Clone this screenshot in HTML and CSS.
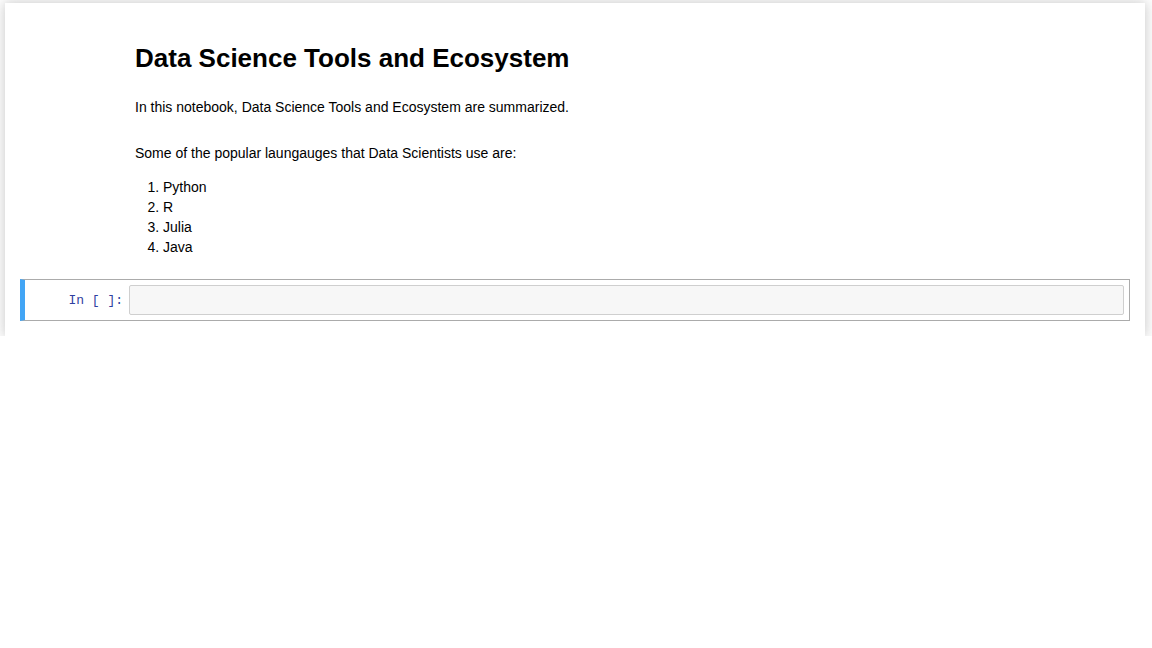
FILE: index.html
```html
<!DOCTYPE html>
<html>
<head>
<meta charset="utf-8">
<link rel="stylesheet" href="styles.css">
</head>
<body>
<div class="notebook">
  <div class="cell text-cell">
    <div class="rendered">
      <h1 class="title">Data Science Tools and Ecosystem</h1>
      <p class="para">In this notebook, Data Science Tools and Ecosystem are summarized.</p>
    </div>
  </div>
  <div class="cell text-cell">
    <div class="rendered">
      <p class="para first">Some of the popular laungauges that Data Scientists use are:</p>
      <ol class="langs">
        <li>Python</li>
        <li>R</li>
        <li>Julia</li>
        <li>Java</li>
      </ol>
    </div>
  </div>
  <div class="code-cell">
    <div class="prompt">In&nbsp;[&nbsp;]:</div>
    <div class="input-area"></div>
  </div>
</div>
</body>
</html>
```
FILE: styles.css
```css
html, body {
  margin: 0;
  padding: 0;
  background: #fff;
}
body {
  font-family: "Liberation Sans", Arial, sans-serif;
  font-size: 14px;
  color: #000;
}
.notebook {
  width: 1140px;
  box-sizing: border-box;
  margin: 3px 0 0 5px;
  padding: 15px;
  background: #fff;
  box-shadow: 0 0 12px 1px rgba(87, 87, 87, 0.3);
}
.text-cell {
  padding-left: 115px;
}
.title {
  font-size: 26px;
  font-weight: bold;
  line-height: 30px;
  margin: 25px 0 0 0;
}
.para {
  margin: 0;
  line-height: 20px;
}
.title + .para {
  margin-top: 24px;
}
.para.first {
  margin-top: 26px;
}
.langs {
  margin: 14px 0 0 0;
  padding-left: 28px;
  line-height: 20px;
}
.code-cell {
  display: flex;
  margin-top: 22px;
  border: 1px solid #ababab;
  border-left: 5px solid #42a5f5;
  padding: 5px;
}
.prompt {
  width: 99px;
  box-sizing: border-box;
  padding-right: 6px;
  padding-top: 1px;
  text-align: right;
  font-family: "Liberation Mono", "DejaVu Sans Mono", monospace;
  font-size: 13px;
  color: #303f9f;
  line-height: 29px;
}
.input-area {
  flex: 1;
  height: 28px;
  background: #f7f7f7;
  border: 1px solid #cfcfcf;
  border-radius: 2px;
}
```
